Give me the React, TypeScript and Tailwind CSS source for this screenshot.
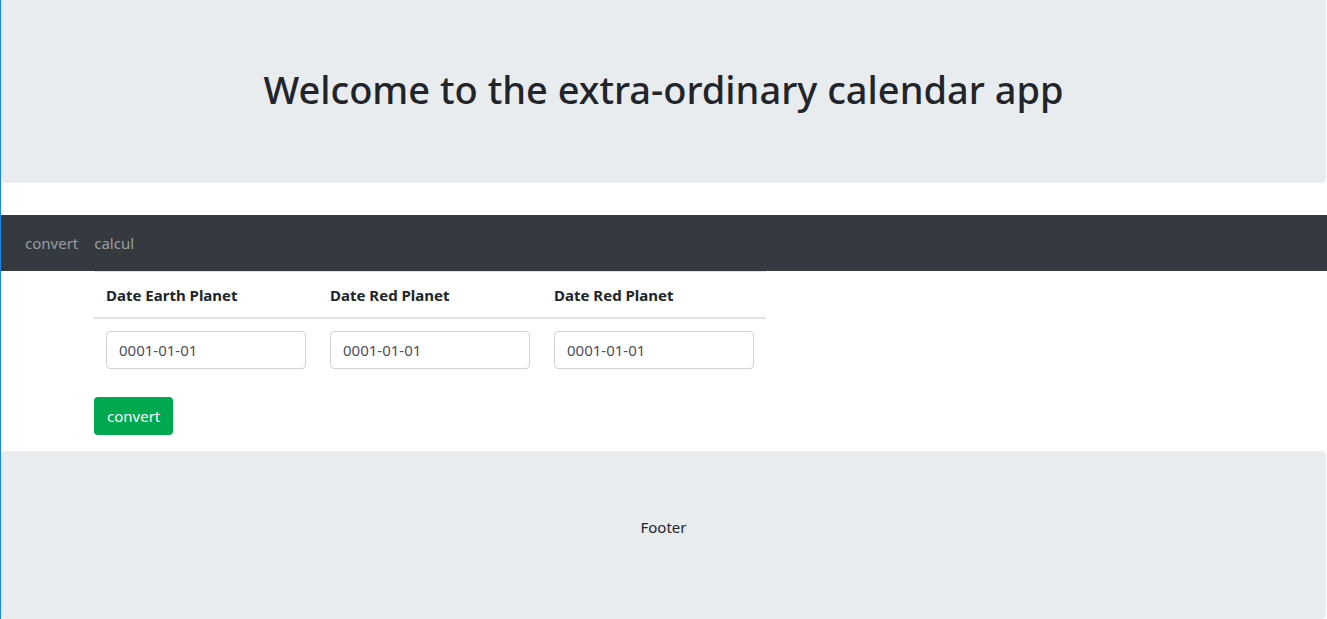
export default function App() {
  const cols = ["Date Earth Planet", "Date Red Planet", "Date Red Planet"];
  return (
    <div
      className="min-h-[619px] border-l-[1px] border-[#2185e8] bg-white text-[#212529]"
      style={{ fontFamily: '"Noto Sans", "Open Sans", sans-serif' }}
    >
      {/* Jumbotron */}
      <div className="h-[183px] bg-[#e9ecef] rounded-b-[5px] mr-[1px] flex items-center justify-center">
        <h1 className="text-[38px] font-medium leading-[1.2] -mt-[4px]">
          Welcome to the extra-ordinary calendar app
        </h1>
      </div>

      {/* Navbar */}
      <nav className="mt-[32px] h-[56px] bg-[#343a40] flex items-center px-[24px] gap-[16px] text-[15px] text-[#9a9da0]">
        <span>convert</span>
        <span>calcul</span>
      </nav>

      {/* Table */}
      <div className="pl-[93px]">
        <table className="w-[672px] border-collapse">
          <thead>
            <tr className="border-t border-[#dee2e6]">
              {cols.map((c, i) => (
                <th
                  key={i}
                  className="text-left font-bold text-[15px] leading-[22px] px-[12px] pt-[12px] pb-[11px] border-b-2 border-[#dee2e6]"
                >
                  {c}
                </th>
              ))}
            </tr>
          </thead>
          <tbody>
            <tr>
              {cols.map((_, i) => (
                <td key={i} className="px-[12px] pt-[12px] pb-[11px]">
                  <input
                    defaultValue="0001-01-01"
                    className="w-[200px] h-[38px] px-[12px] border border-[#ced4da] rounded-[4px] text-[15px] text-[#495057] outline-none"
                  />
                </td>
              ))}
            </tr>
          </tbody>
        </table>
        <button className="mt-[17px] h-[38px] px-[13px] bg-[#00a94f] text-white text-[15px] rounded-[4px]">
          convert
        </button>
      </div>

      {/* Footer */}
      <footer className="mt-[16px] h-[168px] bg-[#e9ecef] rounded-[5px] mr-[1px] flex justify-center pt-[65px] text-[15px]">
        Footer
      </footer>
    </div>
  );
}
